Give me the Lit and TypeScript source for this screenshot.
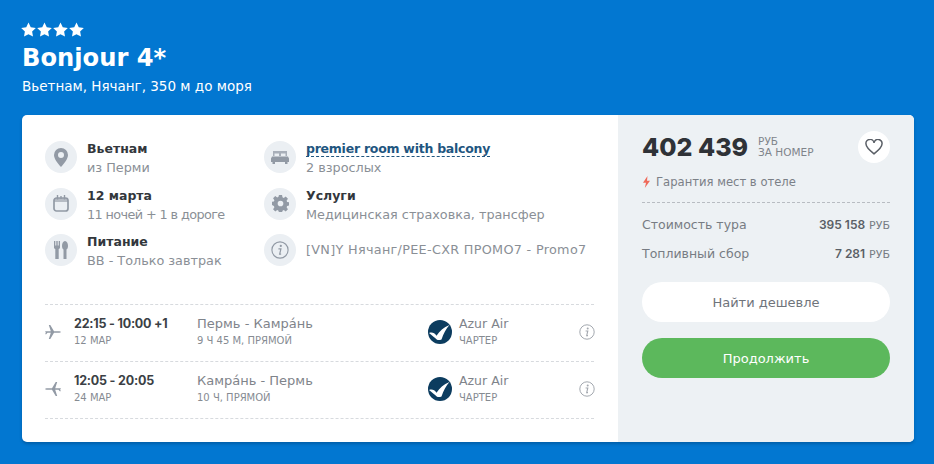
import { LitElement, html, css, svg } from "lit";
import { customElement } from "lit/decorators.js";

const star = svg`<svg width="15" height="15" viewBox="0 0 24 24"><path fill="#fff" d="M12 .8l3.6 7.4 8.1 1.2-5.9 5.7 1.4 8.1L12 19.4l-7.2 3.8 1.4-8.1L.3 9.4l8.1-1.2z"/></svg>`;
const infoIcon = (s: number, c: string) => html`<svg width=${s} height=${s} viewBox="0 0 16 16"><circle cx="8" cy="8" r="7.2" fill="none" stroke=${c} stroke-width="1"/><circle cx="8.7" cy="4.4" r="1" fill=${c}/><path d="M6.6 7h2.2L7.7 11.6h1.3" fill="none" stroke=${c} stroke-width="1.1"/></svg>`;
const G = "#929aa5";
const pin = html`<svg width="14" height="19" viewBox="0 0 14 19"><path fill-rule="evenodd" fill=${G} d="M7 0a7 7 0 0 1 7 7c0 4-4 8.600-7 12C4 15.600 0 11 0 7a7 7 0 0 1 7-7zm0 4a3 3 0 1 0 0 6 3 3 0 0 0 0-6z"/></svg>`;
const cal = html`<svg width="16" height="17" viewBox="0 0 16 17"><rect x="1" y="3" width="14" height="13" rx="2.500" fill="none" stroke=${G} stroke-width="1.700"/><rect x="1" y="3" width="14" height="4" fill=${G} opacity=".6"/><path d="M4.500 0v4.500M8 1v3M11.500 0v4.500" stroke=${G} stroke-width="1.400"/></svg>`;
const food = html`<svg width="14" height="18" viewBox="0 0 14 18"><path fill=${G} d="M0 0h1.300v4.500h1V0h1.400v4.500h1V0H6v6.500c0 .7-.5 1.200-1.300 1.500v10H1.300V8C.5 7.700 0 7.200 0 6.500zM11 0c1.800 0 3 2.300 3 5 0 2-.8 3.200-1.500 3.500V18H9.500V8.500C8.800 8.200 8 7 8 5c0-2.700 1.200-5 3-5z"/></svg>`;
const bed = html`<svg width="18" height="14" viewBox="0 0 18 14"><path fill=${G} opacity=".75" d="M2 1h14v5h-1.500V3.500h-4.500V6H8V3.500H3.500V6H2z"/><path fill=${G} d="M1 6.500h16l1 2V12H0V8.500zM1.500 12H4v2H1.500zM14 12h2.500v2H14z"/></svg>`;
const gear = html`<svg width="17" height="17" viewBox="0 0 24 24"><path fill-rule="evenodd" fill=${G} d="M9.800 0h4.400l.6 3.300 1.800.8 2.800-1.900 3.100 3.100-1.900 2.800.8 1.800 3.100.6v4.400l-3.100.6-.8 1.800 1.900 2.800-3.100 3.100-2.800-1.900-1.800.8-.6 3.100H9.800l-.6-3.100-1.800-.8-2.800 1.900-3.100-3.100 1.900-2.800-.8-1.800L-.5 14V9.800l3.100-.6.8-1.800L1.500 4.600l3.100-3.100 2.800 1.900 1.800-.8zM12 8a4 4 0 1 0 0 8 4 4 0 0 0 0-8z"/></svg>`;
const planeOut = html`<svg width="16" height="14" viewBox="0 0 16 14"><path fill=${G} d="M0 7c0-.4.400-.8 1-.8h4.800L3.800 0h1.500l3.700 6.200h4.500c1.200 0 2.500.3 2.500.8s-1.300.8-2.500.8H9L5.300 14H3.800l2-6.200H2.500L1.200 9.300H.3L.8 7z"/></svg>`;
const planeBack = html`<svg width="16" height="14" viewBox="0 0 16 14"><path fill=${G} d="M16 7c0-.4-.4-.8-1-.8h-4.800L12.200 0h-1.500L7 6.200H2.500C1.300 6.200 0 6.500 0 7s1.300.8 2.500.8H7l3.700 6.200h1.500l-2-6.200h3.300l1.300 1.500h.9L15.200 7z"/></svg>`;
const azur = html`<svg width="24" height="24" viewBox="0 0 24 24"><circle cx="12" cy="12" r="12" fill="#0c3c5f"/><path fill="#fff" d="M1 13c3-1 5.500-.2 7.500 2.800C11.500 11 15.500 7.500 21.500 5c-3.500 4-6 8.500-8 14.500-1.500.6-3 .7-4.500.3C6.500 17.500 4 15.500 1 13z"/></svg>`;

@customElement("app-root")
export class AppRoot extends LitElement {
  static styles = css`
    :host { display: block; width: 934px; height: 464px; background: #0277d1; font-family: "DejaVu Sans", Inter, sans-serif; color: #80858d; overflow: hidden; }
    .page { padding: 22px 20px 0 22px; display: flex; flex-direction: column; }
    .stars { display: flex; gap: 1px; height: 15px; margin-left: -1px; }
    h1 { margin: 4px 0 0; font-size: 24.200px; line-height: 34px; font-weight: 700; color: #fff; }
    .sub { margin-top: 1px; font-size: 13.500px; line-height: 20px; color: #fff; height: 20px; }
    .card { margin-top: 19px; height: 327px; display: flex; border-radius: 5px; overflow: hidden; background: #fff; box-shadow: 0 2px 3px rgba(0,40,80,.3); }
    .left { width: 596px; box-sizing: border-box; padding: 26px 24px 0 23px; }
    .right { flex: 1; background: #edf1f4; padding: 16px 24px 0; }
    .grid { display: grid; grid-template-columns: 219px 1fr; grid-auto-rows: 46.500px; height: 163px; }
    .item { display: flex; gap: 10px; }
    .ic { width: 32px; height: 32px; border-radius: 50%; background: #ebeff3; display: flex; align-items: center; justify-content: center; flex: none; }
    .t { font-size: 12.500px; line-height: 16px; font-weight: 700; color: #33373c; }
    .s { font-size: 12.800px; line-height: 16px; margin-top: 3px; color: #8a8f96; white-space: nowrap; }
    .tight { letter-spacing: -.6px; }
    .wide { letter-spacing: .3px; }
    .single { align-self: flex-start; margin-top: 0; line-height: 32px; }
    .link { color: #1f5680; border-bottom: 1px dashed #1f5680; width: fit-content; line-height: 15px; letter-spacing: -.25px; }
    .flights { border-top: 1px dashed #d7dade; }
    .fl { height: 53px; padding-bottom: 3px; border-bottom: 1px dashed #d7dade; display: flex; align-items: center; }
    .plane { width: 29px; display: flex; }
    .times { width: 123px; }
    .route { width: 231px; }
    .air { display: flex; gap: 7px; align-items: center; width: 150px; }
    .m { font-size: 12.500px; line-height: 17px; }
    .m.b { font-family: Inter, sans-serif; font-weight: 700; color: #3b3f45; letter-spacing: -.2px; }
    .m.r { color: #7f848b; }
    .m.route-name { font-size: 13px; }
    .small { font-size: 10px; line-height: 14px; margin-top: 2px; color: #868b92; }
    .i { margin-left: auto; display: flex; margin-right: -1px; }
    .top { display: flex; align-items: center; height: 32px; }
    .price { font-family: Inter, sans-serif; font-size: 25px; font-weight: 800; color: #2f3237; white-space: nowrap; }
    .unit { font-size: 10.500px; line-height: 11px; margin-left: 10px; color: #7f848b; }
    .heart { margin-left: auto; width: 32px; height: 32px; background: #fff; border-radius: 50%; display: flex; align-items: center; justify-content: center; }
    .g { display: flex; align-items: center; gap: 5px; font-size: 11.600px; line-height: 16px; margin-top: 11px; color: #7b8087; }
    .rows { border-top: 1px dashed #b8bcc2; margin-top: 12px; padding-top: 7px; }
    .row { display: flex; justify-content: space-between; align-items: baseline; height: 29px; line-height: 29px; font-size: 12.500px; color: #777c83; }
    .row b { font-family: Inter, sans-serif; font-size: 12px; font-weight: 600; color: #5a5f66; }
    .row span span { font-size: 11px; }
    .btn { height: 40px; border-radius: 20px; display: flex; align-items: center; justify-content: center; font-size: 13px; }
    .find { background: #fff; color: #6f747b; margin-top: 14px; }
    .go { background: #5cb85c; color: #fff; margin-top: 16px; }
  `;

  private flight(pl: unknown, time: string, date: string, route: unknown, dur: string) {
    return html`<div class="fl">
      <div class="plane">${pl}</div>
      <div class="times"><div class="m b">${time}</div><div class="small">${date}</div></div>
      <div class="route"><div class="m r route-name">${route}</div><div class="small">${dur}</div></div>
      <div class="air">${azur}<div><div class="m r">Azur Air</div><div class="small">ЧАРТЕР</div></div></div>
      <div class="i">${infoIcon(16, "#a3a8af")}</div>
    </div>`;
  }

  render() {
    return html`<div class="page">
      <div class="stars">${star}${star}${star}${star}</div>
      <h1>Bonjour 4*</h1>
      <div class="sub">Вьетнам, Нячанг, 350 м до моря</div>
      <div class="card">
        <div class="left">
          <div class="grid">
            <div class="item"><div class="ic">${pin}</div><div><div class="t">Вьетнам</div><div class="s">из Перми</div></div></div>
            <div class="item"><div class="ic">${bed}</div><div><div class="t link">premier room with balcony</div><div class="s">2 взрослых</div></div></div>
            <div class="item"><div class="ic">${cal}</div><div><div class="t">12 марта</div><div class="s tight">11 ночей + 1 в дороге</div></div></div>
            <div class="item"><div class="ic">${gear}</div><div><div class="t">Услуги</div><div class="s">Медицинская страховка, трансфер</div></div></div>
            <div class="item"><div class="ic">${food}</div><div><div class="t">Питание</div><div class="s">BB - Только завтрак</div></div></div>
            <div class="item"><div class="ic">${infoIcon(18, G)}</div><div class="s single wide">[VN]Y Нячанг/PEE-CXR ПРОМО7 - Promo7</div></div>
          </div>
          <div class="flights">
            ${this.flight(planeOut, "22:15 - 10:00 +1", "12 МАР", "Пермь - Камра́нь", "9 Ч 45 М, ПРЯМОЙ")}
            ${this.flight(planeBack, "12:05 - 20:05", "24 МАР", "Камра́нь - Пермь", "10 Ч, ПРЯМОЙ")}
          </div>
        </div>
        <div class="right">
          <div class="top">
            <div class="price">402 439</div>
            <div class="unit">РУБ<br />ЗА НОМЕР</div>
            <div class="heart"><svg width="18" height="16" viewBox="0 0 18 16"><path fill="none" stroke="#5a5f66" stroke-width="1.500" d="M9 14.800C3.500 10.500 1 8 1 5a4 4 0 0 1 8-1.200A4 4 0 0 1 17 5c0 3-2.500 5.500-8 9.800z"/></svg></div>
          </div>
          <div class="g"><svg width="9" height="12" viewBox="0 0 9 12"><path fill="#ef6a5a" d="M5.500 0L1 6.800h3L2.800 12 8 4.800H5z"/></svg>Гарантия мест в отеле</div>
          <div class="rows">
            <div class="row"><span>Стоимость тура</span><span><b>395 158</b> <span>РУБ</span></span></div>
            <div class="row"><span>Топливный сбор</span><span><b>7 281</b> <span>РУБ</span></span></div>
          </div>
          <div class="btn find">Найти дешевле</div>
          <div class="btn go">Продолжить</div>
        </div>
      </div>
    </div>`;
  }
}
